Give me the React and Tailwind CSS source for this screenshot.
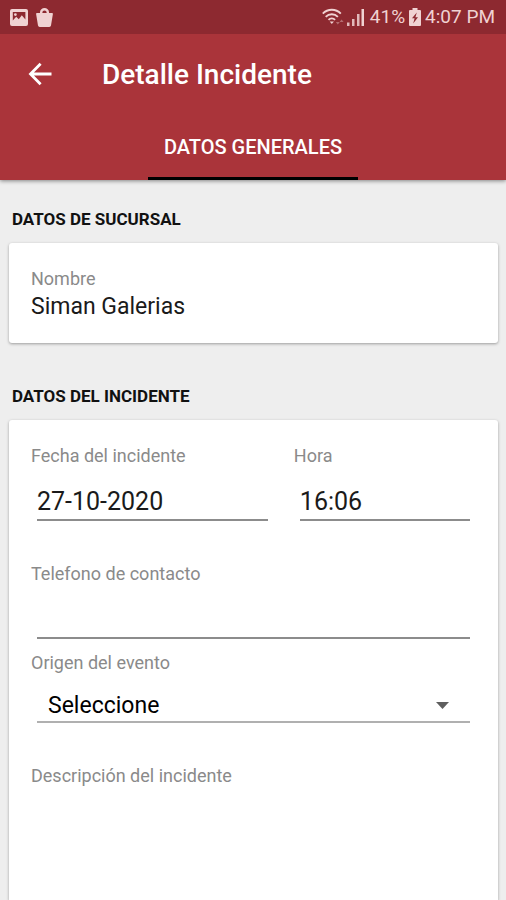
const StatusBar = () => (
  <div className="flex h-[34px] items-center justify-between bg-[#8d2930] pr-[11px] pl-[10px] text-[#f0d2d2]">
    <div className="flex items-center gap-2">
      <svg width="18" height="17" viewBox="0 0 18 17" fill="currentColor" aria-hidden="true">
        <path
          fillRule="evenodd"
          d="M2 0h14a2 2 0 0 1 2 2v13a2 2 0 0 1-2 2H2a2 2 0 0 1-2-2V2a2 2 0 0 1 2-2Zm.8 3v8.5l3.4-3.8 2.6 2.6 3-4 3.6 4.2V3Zm2.6 1.2a1.4 1.4 0 1 1 0 2.8 1.4 1.4 0 0 1 0-2.8Z"
        />
      </svg>
      <svg width="17" height="19" viewBox="0 0 17 19" fill="currentColor" aria-hidden="true">
        <path d="M5.200 6V4.200a3.300 3 0 0 1 6.600 0V6" fill="none" stroke="currentColor" strokeWidth="2.400" />
        <path d="M1 5h15a.9.9 0 0 1 .9 1L15 17.500a1.800 1.800 0 0 1-1.800 1.500H3.800A1.800 1.800 0 0 1 2 17.500L.1 6a.9.9 0 0 1 .9-1Z" />
      </svg>
    </div>
    <div className="flex items-center text-[19px] leading-6">
      <svg width="22" height="18" viewBox="0 0 22 18" fill="none" stroke="currentColor" strokeWidth="1.900" aria-hidden="true">
        <path d="M.8 5.600a12.500 12.500 0 0 1 18 0" />
        <path d="M3.700 8.800a8.600 8.600 0 0 1 12.200 0" />
        <path d="M6.500 11.900a4.700 4.700 0 0 1 6.600 0" />
        <path d="M7.700 13.600h4.200l-2.100 2.500Z" fill="currentColor" stroke="none" />
        <path d="m13.800 14 2 2.600 2-2.600ZM17.600 14l2-2.600 2 2.600Z" fill="currentColor" stroke="none" opacity=".4" />
      </svg>
      <svg className="ml-[3px]" width="18" height="18" viewBox="0 0 18 18" fill="currentColor" aria-hidden="true">
        <path d="M0 14.500h2.500V18H0ZM5 11h2.500v7H5ZM10 6h2.500v12H10Z" opacity=".85" />
        <path d="M14.500 1H17v17h-2.500Z" />
      </svg>
      <span className="ml-[5px]">41%</span>
      <svg className="mx-1" width="12" height="18" viewBox="0 0 12 18" aria-hidden="true">
        <path d="M3.500 0h5v2H11a1 1 0 0 1 1 1v14a1 1 0 0 1-1 1H1a1 1 0 0 1-1-1V3a1 1 0 0 1 1-1h2.500Z" fill="currentColor" />
        <path d="M7.800 4.500 3 10.200h2.600l-1.400 5.300L9 9.300H6.400Z" fill="#8d2930" />
      </svg>
      <span>4:07 PM</span>
    </div>
  </div>
);

const Header = () => (
  <header className="z-10 bg-[#aa343a] text-white shadow-[0_1px_4px_rgba(0,0,0,0.45)]">
    <StatusBar />
    <div className="flex h-[82px] items-center gap-[49px] pl-[27px]">
      <button type="button" aria-label="Volver">
        <svg width="26" height="26" viewBox="0 0 26 26" fill="none" stroke="currentColor" strokeWidth="2.800" aria-hidden="true">
          <path d="M24.500 12H4M13.600 1.800 3.500 12l10.100 10.200" />
        </svg>
      </button>
      <h1 className="text-[28px] leading-8 font-medium">Detalle Incidente</h1>
    </div>
    <nav className="flex justify-center">
      <button
        type="button"
        className="h-16 border-b-[3px] border-black px-4 text-[20px] leading-6 font-medium"
      >
        DATOS GENERALES
      </button>
    </nav>
  </header>
);

const SectionTitle = ({ children }) => (
  <h2 className="px-[3px] pb-3 text-[17px] leading-6 font-bold text-[#111]">{children}</h2>
);

const Label = ({ htmlFor, children }) => (
  <label htmlFor={htmlFor} className="block text-[18px] leading-6 text-[#8a8a8a]">
    {children}
  </label>
);

const inputClass =
  "block w-full border-b-2 border-[#8c8c8c] bg-transparent text-[25px] leading-8 text-[#1a1a1a] outline-none";

const App = () => {
  return (
    <div className="flex min-h-screen flex-col bg-[#eeeeee] font-[Roboto,sans-serif]">
      <Header />
      <main className="flex flex-1 flex-col pt-[27px] pr-2 pl-[9px]">
        <section>
          <SectionTitle>DATOS DE SUCURSAL</SectionTitle>
          <dl className="rounded-[3px] bg-white px-[22px] pt-6 pb-[22px] shadow-[0_1px_3px_rgba(0,0,0,0.35)]">
            <dt className="text-[18px] leading-6 text-[#8a8a8a]">Nombre</dt>
            <dd className="pt-[2px] text-[23px] leading-7 text-[#1a1a1a]">Siman Galerias</dd>
          </dl>
        </section>

        <section className="flex flex-1 flex-col pt-[41px]">
          <SectionTitle>DATOS DEL INCIDENTE</SectionTitle>
          <form className="flex-1 rounded-t-[3px] bg-white px-[22px] pt-6 shadow-[0_1px_3px_rgba(0,0,0,0.35)]">
            <div className="grid grid-cols-[4fr_3fr] gap-5">
              <div>
                <Label htmlFor="fecha">Fecha del incidente</Label>
                <div className="px-[6px] pt-4">
                  <input id="fecha" type="text" defaultValue="27-10-2020" className={inputClass + " h-[37px]"} />
                </div>
              </div>
              <div>
                <Label htmlFor="hora">Hora</Label>
                <div className="px-[6px] pt-4">
                  <input id="hora" type="text" defaultValue="16:06" className={inputClass + " h-[37px]"} />
                </div>
              </div>
            </div>

            <div className="pt-[41px]">
              <Label htmlFor="telefono">Telefono de contacto</Label>
              <div className="px-[6px] pt-4">
                <input id="telefono" type="tel" className={inputClass + " h-[37px]"} />
              </div>
            </div>

            <div className="pt-3">
              <Label htmlFor="origen">Origen del evento</Label>
              <div className="px-[6px] pt-4">
                <div className="relative">
                  <select
                    id="origen"
                    className="block h-8 w-full appearance-none border-b-2 border-[#b0b0b0] bg-transparent pl-[11px] text-[23px] leading-7 text-black outline-none"
                  >
                    <option>Seleccione</option>
                  </select>
                  <svg
                    className="pointer-events-none absolute top-[11px] right-[21px]"
                    width="13"
                    height="7"
                    viewBox="0 0 13 7"
                    fill="#5f5f5f"
                    aria-hidden="true"
                  >
                    <path d="M0 0h13L6.500 7Z" />
                  </svg>
                </div>
              </div>
            </div>

            <div className="pt-[41px]">
              <Label htmlFor="descripcion">Descripción del incidente</Label>
              <textarea
                id="descripcion"
                rows="3"
                className="block w-full resize-none bg-transparent px-[6px] text-[23px] leading-7 text-[#1a1a1a] outline-none"
              />
            </div>
          </form>
        </section>
      </main>
    </div>
  );
};

export default App;
